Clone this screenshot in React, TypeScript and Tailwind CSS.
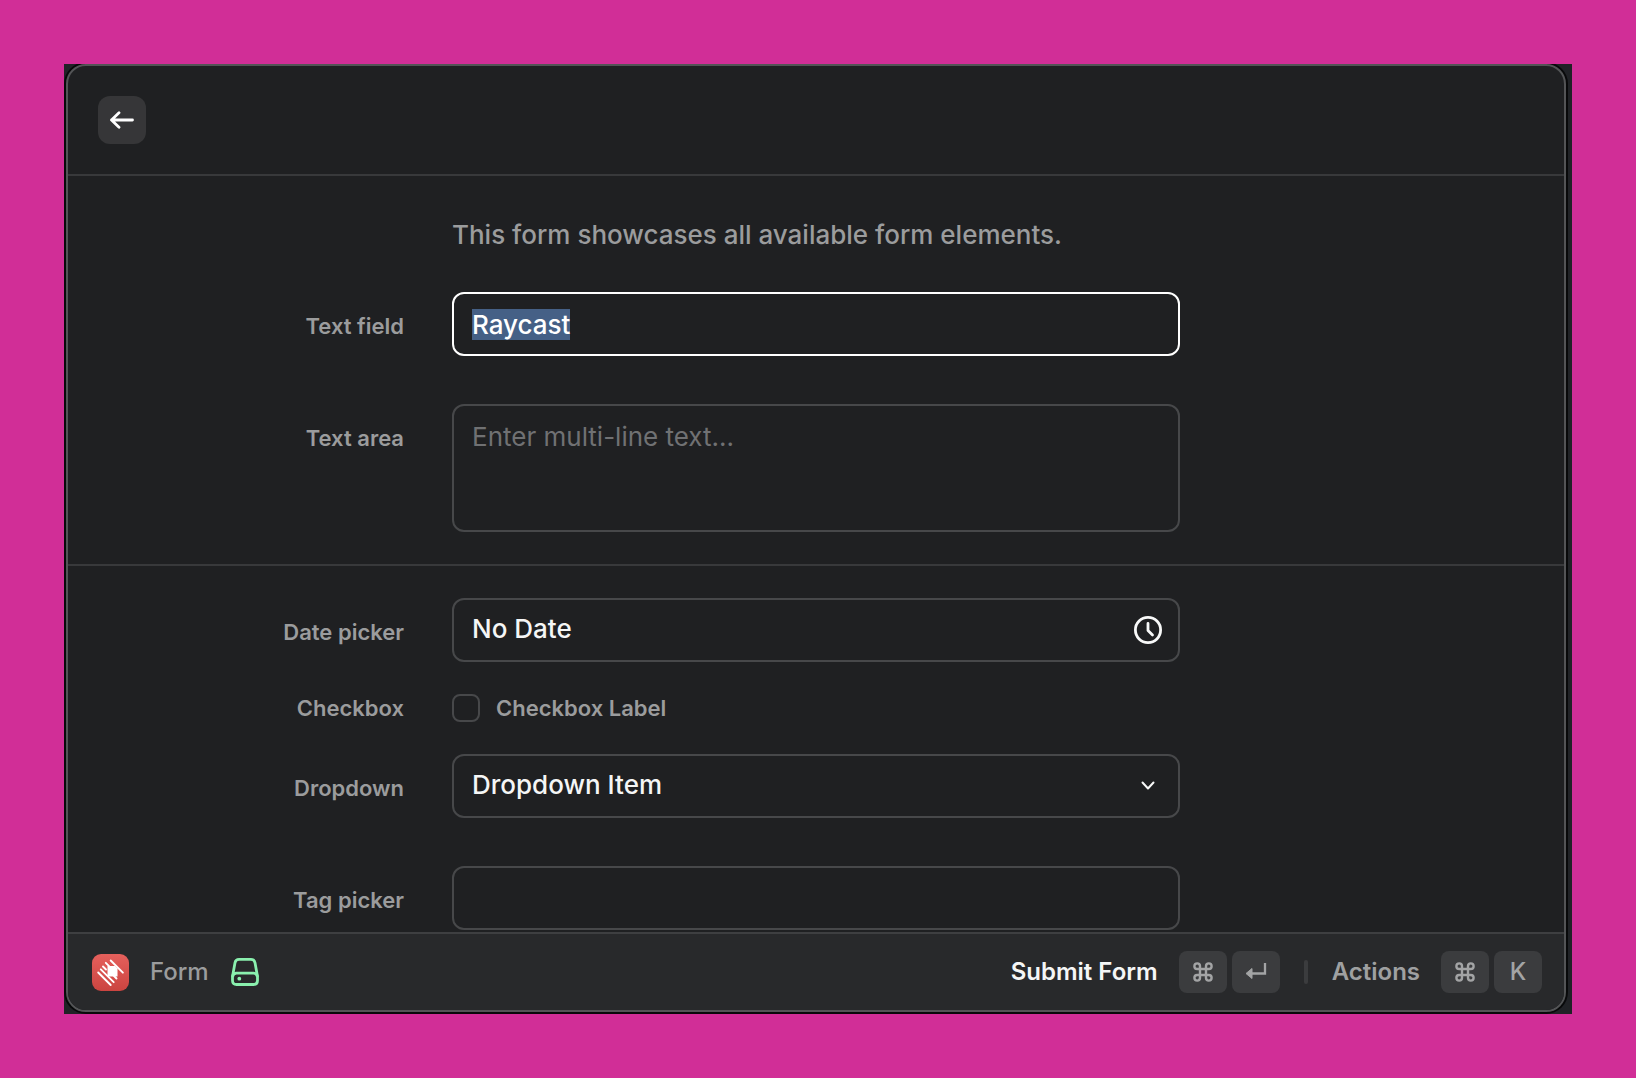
import { useEffect, useRef } from "react";
import type { ReactNode } from "react";

const fieldBase =
  "block h-16 w-full rounded-xl border-2 border-[#47484a] bg-transparent px-[18px] text-[26px] leading-8 font-medium text-[#f5f6f6] outline-none";

function Row({ label, htmlFor, children, compact }: { label: string; htmlFor: string; children: ReactNode; compact?: boolean }) {
  return (
    <div className="grid grid-cols-[1fr_minmax(0,728px)_1fr] items-start gap-x-12">
      <label
        htmlFor={htmlFor}
        className={
          compact
            ? "flex h-7 items-center justify-end text-[22px] font-semibold text-[#9b9c9d]"
            : "flex h-16 items-center justify-end pt-1 text-[22px] font-semibold text-[#9b9c9d]"
        }
      >
        {label}
      </label>
      {children}
    </div>
  );
}

function Key({ children }: { children: ReactNode }) {
  return (
    <kbd className="flex h-[42px] w-12 items-center justify-center rounded-lg bg-[#3b3c3e] font-[Inter,sans-serif] text-2xl font-medium text-[#a3a4a5]">
      {children}
    </kbd>
  );
}

function CommandIcon() {
  return (
    <svg width="20" height="20" viewBox="0 0 20 20" fill="none" stroke="currentColor" strokeWidth="2.400" aria-label="Command">
      <path d="M7 7h6v6H7zM7 7V4.200a2.800 2.800 0 1 0-2.800 2.800zM13 7h2.800a2.800 2.800 0 1 0-2.800-2.800zM13 13v2.800a2.800 2.800 0 1 0 2.800-2.800zM7 13H4.200a2.800 2.800 0 1 0 2.800 2.800z" />
    </svg>
  );
}

function ReturnIcon() {
  return (
    <svg width="22" height="18" viewBox="0 0 22 18" aria-label="Return">
      <path d="M20 0v10.500H6" fill="none" stroke="currentColor" strokeWidth="2.300" />
      <path d="M1 10.500l6-5v10z" fill="currentColor" stroke="currentColor" strokeLinejoin="round" />
    </svg>
  );
}

function AppLogo() {
  return (
    <svg width="37" height="37" viewBox="0 0 37 37" aria-hidden="true">
      <defs>
        <linearGradient id="logoFill" x1="0" y1="0" x2="0" y2="1">
          <stop offset="0" stopColor="#e5605c" />
          <stop offset="1" stopColor="#cb4440" />
        </linearGradient>
      </defs>
      <rect width="37" height="37" rx="9" fill="url(#logoFill)" />
      <g stroke="#fff" strokeWidth="1.900" strokeLinecap="round" fill="none">
        <path d="M18.700 6.500l12.200 12.200M6.200 18.500l12.500 12.500" />
        <path d="M13.800 8.800l3.500 3.500M11 12.500l3 3M8.800 15.300l12.900 12.900" />
        <path d="M22 22l2.500 2.500" />
      </g>
      <path d="M15.500 12h7.500l2.500 2.500v8h-10z" fill="#fff" />
    </svg>
  );
}

function DriveIcon() {
  return (
    <svg width="28" height="28" viewBox="0 0 28 28" fill="none" stroke="#8af0ae" strokeWidth="2.800" strokeLinejoin="round" aria-hidden="true">
      <path d="M1.500 18.500L4 4.800Q4.600 1.400 8 1.400H20Q23.400 1.400 24 4.800L26.500 18.500V22.500Q26.500 26.500 22.500 26.500H5.500Q1.500 26.500 1.500 22.500Z" />
      <path d="M1.500 19Q2 15.200 5.500 15.200H22.500Q26 15.200 26.500 19" />
      <circle cx="8.300" cy="20.700" r="1.900" fill="#8af0ae" stroke="none" />
    </svg>
  );
}

export default function App() {
  const nameRef = useRef<HTMLInputElement>(null);

  useEffect(() => {
    nameRef.current?.focus();
    nameRef.current?.select();
  }, []);

  return (
    <div className="flex h-screen flex-col bg-[#d12e97] p-16 font-[Inter,sans-serif]">
      <div className="flex min-h-0 flex-1 flex-col overflow-hidden bg-[#202226] pr-1.5 pb-0.5 pl-0.5">
        <main className="flex min-h-0 flex-1 flex-col overflow-hidden rounded-[20px] border-2 border-[#535456] bg-[#1f2022] shadow-[0_0_0_2px_#08090a]">
          <header className="flex h-[110px] shrink-0 items-start border-b-2 border-[#38393b] px-[30px] pt-[30px]">
            <button type="button" aria-label="Back" className="flex size-12 items-center justify-center rounded-xl bg-[#363638]">
              <svg width="24" height="18" viewBox="0 0 24 18" fill="none" stroke="#fff" strokeWidth="2.800" strokeLinecap="round" strokeLinejoin="round">
                <path d="M22.500 9H1.500M9 1.800L1.500 9L9 16.200" />
              </svg>
            </button>
          </header>

          <form id="showcase" className="min-h-0 flex-1 overflow-hidden" onSubmit={(e) => e.preventDefault()}>
            <section className="flex flex-col gap-12 border-b-2 border-[#38393b] pt-[43px] pb-8">
              <div className="-mb-[7px] grid grid-cols-[1fr_minmax(0,728px)_1fr] gap-x-12">
                <p className="col-start-2 text-[26px] leading-8 font-medium text-[#9b9c9d]">This form showcases all available form elements.</p>
              </div>
              <Row label="Text field" htmlFor="name">
                <input
                  ref={nameRef}
                  id="name"
                  type="text"
                  defaultValue="Raycast"
                  className="block h-16 w-full rounded-xl border-2 border-white bg-transparent px-[18px] text-[26px] leading-8 font-medium text-white caret-transparent outline-none selection:bg-[#456086] selection:text-white"
                />
              </Row>
              <Row label="Text area" htmlFor="notes">
                <textarea
                  id="notes"
                  placeholder="Enter multi-line text..."
                  className="block h-32 w-full resize-none rounded-xl border-2 border-[#47484a] bg-transparent px-[18px] py-[15px] text-[26px] leading-8 text-white outline-none placeholder:text-[#707173]"
                />
              </Row>
            </section>

            <section className="flex flex-col gap-8 pt-8">
              <Row label="Date picker" htmlFor="date">
                <div className="relative">
                  <input id="date" type="text" readOnly value="No Date" className={fieldBase + " pb-1"} />
                  <svg className="pointer-events-none absolute top-[18px] right-[18px]" width="28" height="28" viewBox="0 0 28 28" fill="none" stroke="#f8f9f9" strokeWidth="2.800" strokeLinecap="round" strokeLinejoin="round">
                    <circle cx="14" cy="14" r="12.600" />
                    <path d="M14 7.500V14.500L18.500 19" />
                  </svg>
                </div>
              </Row>
              <Row label="Checkbox" htmlFor="check" compact>
                <div className="flex h-7 items-center gap-4">
                  <input id="check" type="checkbox" className="size-7 appearance-none rounded-lg border-2 border-[#47484a]" />
                  <label htmlFor="check" className="text-[22px] font-semibold text-[#9b9c9d]">
                    Checkbox Label
                  </label>
                </div>
              </Row>
              <Row label="Dropdown" htmlFor="dropdown">
                <div className="relative">
                  <select id="dropdown" className={fieldBase + " appearance-none pb-0.5"}>
                    <option>Dropdown Item</option>
                  </select>
                  <svg className="pointer-events-none absolute top-[27px] right-[25px]" width="14" height="9" viewBox="0 0 14 9" fill="none" stroke="#f8f9f9" strokeWidth="2" strokeLinecap="round" strokeLinejoin="round">
                    <path d="M1.500 1.500L7 7.500L12.500 1.500" />
                  </svg>
                </div>
              </Row>
              <div className="pt-4">
                <Row label="Tag picker" htmlFor="tags">
                  <input id="tags" type="text" className={fieldBase} />
                </Row>
              </div>
            </section>
          </form>

          <footer className="flex h-[78px] shrink-0 items-center border-t-2 border-[#3e3f41] bg-[#28292b] pr-[22px] pl-6 text-2xl">
            <AppLogo />
            <span className="ml-[21px] font-medium text-[#9b9c9d]">Form</span>
            <span className="ml-[22px]">
              <DriveIcon />
            </span>
            <div className="ml-auto flex items-center">
              <button type="submit" form="showcase" className="flex items-center gap-[21px] font-semibold text-[#f5f6f6]">
                Submit Form
                <span className="flex gap-[5px]">
                  <Key><CommandIcon /></Key>
                  <Key><ReturnIcon /></Key>
                </span>
              </button>
              <span className="mx-6 h-6 w-1 rounded-full bg-[#3b3c3e]" />
              <button type="button" className="flex items-center gap-[21px] font-semibold text-[#9fa0a1]">
                Actions
                <span className="flex gap-[5px]">
                  <Key><CommandIcon /></Key>
                  <Key>K</Key>
                </span>
              </button>
            </div>
          </footer>
        </main>
      </div>
    </div>
  );
}
